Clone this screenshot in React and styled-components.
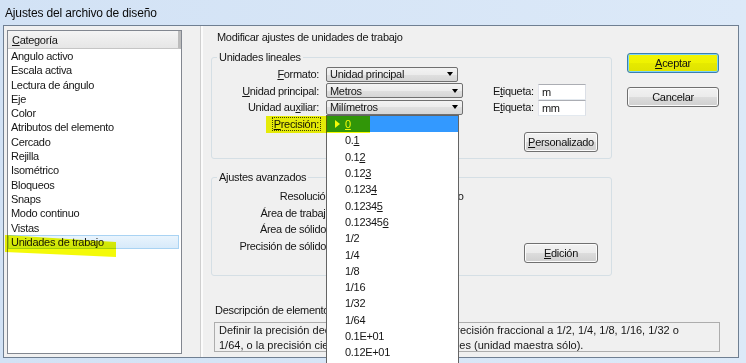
import React from 'react';
import styled, { createGlobalStyle, css } from 'styled-components';

const GlobalStyle = createGlobalStyle`
  html, body { margin: 0; padding: 0; background: #d3e3f6; }
  body {
    width: 746px; height: 363px; overflow: hidden;
    font-family: "Liberation Sans", Arial, sans-serif;
    font-size: 11px; letter-spacing: -0.3px; color: #151515;
  }
  * { box-sizing: border-box; }
  u { text-decoration-thickness: 1px; text-underline-offset: 1px; }
`;

const Window = styled.div`
  position: relative;
  width: 746px; height: 363px; overflow: hidden;
  background: linear-gradient(to right, #d2e2f5, #dce9f8);
  display: flex; flex-direction: column;
  isolation: isolate;
`;

const TitleBar = styled.div`
  height: 25px; flex: none;
  display: flex; align-items: center;
  padding: 1px 0 0 5px;
  font-size: 12px; letter-spacing: -0.15px; color: #0a0a0a;
`;

const Body = styled.div`
  margin: 0 7px 0 3px;
  height: 333px; flex: none;
  border: 1px solid #6f7f92;
  background: #f0f0f0;
  display: flex;
`;

const LeftPane = styled.div`
  width: 196px; flex: none;
  padding: 4px 0 0 3px;
`;

const ListBox = styled.div`
  width: 175px; height: 324px;
  border: 1px solid #828790;
  background: #fff;
  display: flex; flex-direction: column;
`;

const ListHeader = styled.div`
  height: 18px; flex: none;
  display: flex; align-items: center;
  padding-left: 4px;
  background: linear-gradient(#f4f4f4, #e6e6e6);
  border-bottom: 1px solid #c5c5c5;
  border-right: 3px solid #bcbcbc;
`;

const ListItem = styled.div`
  height: 14.3px; line-height: 13.3px;
  padding-left: 2px;
  border: 1px solid transparent;
  white-space: nowrap;
  &:first-of-type { margin-top: 2px; }
  ${(p) => p.$selected && css`
    background: linear-gradient(#e9f4fd, #d7eafa);
    border-color: #a9d3f3;
    margin-right: 2px;
  `}
`;

const Splitter = styled.div`
  width: 3px; flex: none;
  border-left: 1px solid #cfcfcf;
  background: #fbfbfb;
`;

const RightPane = styled.div`
  flex: 1;
  display: grid;
  grid-template-columns: 401px 92px;
  column-gap: 15px;
  align-content: start;
  padding: 4px 0 0 8px;
`;

const MainCol = styled.div`
  display: flex; flex-direction: column;
`;

const Heading = styled.div`
  height: 14px; line-height: 14px;
  padding-left: 6px;
`;

const Group = styled.fieldset`
  margin: ${(p) => p.$gap}px 0 0 0;
  padding: 0;
  min-width: 0;
  border: 1px solid #d5dfe5;
  border-radius: 3px;
`;

const Legend = styled.legend`
  margin-left: 5px;
  padding: 0 2px;
  height: 14px; line-height: 14px;
`;

const UnitsGrid = styled.div`
  display: grid;
  grid-template-columns: 114px 137px 75px 48px;
  grid-auto-rows: 16.5px;
  align-items: center;
  padding-top: 2px;
`;

const FieldLabel = styled.div`
  text-align: right;
  padding-right: ${(p) => p.$pr ?? 7}px;
  white-space: nowrap;
`;

const SideLabel = styled.div`
  padding-left: 30px;
  white-space: nowrap;
`;

const FocusText = styled.span`
  outline: 1px dotted #444;
  outline-offset: 0;
  padding: 0 1px;
`;

const Combo = styled.div`
  width: ${(p) => p.$w}px; height: 15px;
  border: 1px solid #707070;
  border-radius: 2px;
  background: linear-gradient(#f3f3f3, #ececec 50%, #e0e0e0 50%, #d6d6d6);
  display: flex; align-items: center; justify-content: space-between;
  padding: 0 4px 0 3px;
  white-space: nowrap;
`;

const ComboArrow = styled.span`
  width: 0; height: 0;
  border-left: 3.5px solid transparent;
  border-right: 3.5px solid transparent;
  border-top: 4px solid #000;
`;

const TextBox = styled.div`
  width: 48px; height: 16px;
  margin-top: 2px;
  background: #fff;
  border: 1px solid;
  border-color: #abadb3 #dbdfe6 #e3e9ef #e2e3ea;
  padding-left: 3px;
  line-height: 14px;
`;

const ButtonRow = styled.div`
  display: flex; justify-content: flex-end;
  padding: 0 13px 6px 0;
`;

const Button = styled.button`
  font: inherit; letter-spacing: inherit; color: #111;
  width: ${(p) => p.$w}px; height: 20px;
  padding: 0; margin: 0;
  border: 1px solid #707070;
  border-radius: 3px;
  background: linear-gradient(#f2f2f2 0%, #ebebeb 50%, #dddddd 50%, #cfcfcf 100%);
  box-shadow: inset 0 0 0 1px #fbfbfb;
  ${(p) => p.$default && css`
    border-color: #3c7fb1;
    background: linear-gradient(#f1f505 0%, #eef200 50%, #e6ea00 50%, #dfe300 100%);
    box-shadow: inset 0 0 0 1px #7fd4f5;
  `}
`;

const AdvGrid = styled.div`
  display: grid;
  grid-template-columns: 123px 1fr 74px;
  grid-template-rows: repeat(4, 16.5px) 9px;
  align-items: center;
  padding: 4px 13px 12px 0;
`;

const Value = styled.div`
  padding-left: 7px;
  white-space: nowrap;
`;

const EditButton = styled(Button)`
  grid-column: 3;
  grid-row: 4 / span 2;
  align-self: end;
`;

const ButtonCol = styled.div`
  display: flex; flex-direction: column; gap: 14px;
  padding-top: 23px;
`;

const DescArea = styled.div`
  grid-column: 1 / -1;
  padding-top: 27px;
`;

const DescLabel = styled.div`
  height: 14px; line-height: 14px;
  padding-left: 4px;
`;

const DescBox = styled.div`
  margin: 5px 0 0 3px;
  width: 506px; height: 30px;
  border: 1px solid #adadad;
  padding: 0 4px;
  line-height: 14.5px;
  letter-spacing: 0;
  white-space: nowrap;
`;

const DropList = styled.ul`
  position: absolute;
  left: 326px; top: 115px;
  width: 133px; height: 262px;
  margin: 0; padding: 0;
  list-style: none;
  background: #fff;
  border: 1px solid #646464;
  z-index: 5;
`;

const DropItem = styled.li`
  height: 16.3px;
  display: flex; align-items: center;
  padding-left: 18px;
  white-space: nowrap;
  ${(p) => p.$active && css`
    background: #3399ff;
    color: #fff;
    padding-left: 8px;
  `}
`;

const Pointer = styled.span`
  width: 0; height: 0;
  border-top: 4px solid transparent;
  border-bottom: 4px solid transparent;
  border-left: 5px solid #fff;
  margin-right: 5px;
`;

const Highlighter = styled.div`
  position: absolute;
  left: ${(p) => p.$x}px; top: ${(p) => p.$y}px;
  width: ${(p) => p.$w}px; height: ${(p) => p.$h}px;
  background: #f4fa08;
  mix-blend-mode: multiply;
  clip-path: ${(p) => p.$clip || 'none'};
  z-index: 10;
  pointer-events: none;
`;

const categories = [
  'Angulo activo', 'Escala activa', 'Lectura de ángulo', 'Eje', 'Color',
  'Atributos del elemento', 'Cercado', 'Rejilla', 'Isométrico', 'Bloqueos',
  'Snaps', 'Modo continuo', 'Vistas', 'Unidades de trabajo',
];

const precisions = [
  ['0', ''], ['0.', '1'], ['0.1', '2'], ['0.12', '3'], ['0.123', '4'], ['0.1234', '5'],
  ['0.12345', '6'], ['1/2'], ['1/4'], ['1/8'], ['1/16'], ['1/32'], ['1/64'],
  ['0.1E+01'], ['0.12E+01'],
];

export default function App() {
  return (
    <>
      <GlobalStyle />
      <Window>
        <TitleBar>Ajustes del archivo de diseño</TitleBar>
        <Body>
          <LeftPane>
            <ListBox>
              <ListHeader><span><u>C</u>ategoría</span></ListHeader>
              {categories.map((c) => (
                <ListItem key={c} $selected={c === 'Unidades de trabajo'}>{c}</ListItem>
              ))}
            </ListBox>
          </LeftPane>
          <Splitter />
          <RightPane>
            <MainCol>
              <Heading>Modificar ajustes de unidades de trabajo</Heading>
              <Group $gap={6}>
                <Legend>Unidades lineales</Legend>
                <UnitsGrid>
                  <FieldLabel><u>F</u>ormato:</FieldLabel>
                  <Combo $w={132}><span>Unidad principal</span><ComboArrow /></Combo>
                  <div />
                  <div />

                  <FieldLabel><u>U</u>nidad principal:</FieldLabel>
                  <Combo $w={137}><span>Metros</span><ComboArrow /></Combo>
                  <SideLabel>E<u>t</u>iqueta:</SideLabel>
                  <TextBox>m</TextBox>

                  <FieldLabel>Unidad au<u>x</u>iliar:</FieldLabel>
                  <Combo $w={137}><span>Milímetros</span><ComboArrow /></Combo>
                  <SideLabel>E<u>t</u>iqueta:</SideLabel>
                  <TextBox>mm</TextBox>

                  <FieldLabel $pr={6}><FocusText><u>P</u>recisión:</FocusText></FieldLabel>
                  <Combo $w={132}><span /><ComboArrow /></Combo>
                </UnitsGrid>
                <ButtonRow>
                  <Button $w={74}><u>P</u>ersonalizado</Button>
                </ButtonRow>
              </Group>
              <Group $gap={11}>
                <Legend>Ajustes avanzados</Legend>
                <AdvGrid>
                  <FieldLabel $pr={1}>Resolución:</FieldLabel>
                  <Value>10000 por Distancia Metro</Value>
                  <div />
                  <FieldLabel $pr={1}>Área de trabajo:</FieldLabel>
                  <div />
                  <div />
                  <FieldLabel $pr={1}>Área de sólidos:</FieldLabel>
                  <div />
                  <div />
                  <FieldLabel $pr={1}>Precisión de sólidos:</FieldLabel>
                  <div />
                  <EditButton $w={74}><u>E</u>dición</EditButton>
                </AdvGrid>
              </Group>
            </MainCol>
            <ButtonCol>
              <Button $w={92} $default><u>A</u>ceptar</Button>
              <Button $w={92}>Cancelar</Button>
            </ButtonCol>
            <DescArea>
              <DescLabel>Descripción de elementos</DescLabel>
              <DescBox>
                <div>Definir la precisión decimal de 0 a 6 lugares, la precisión fraccional a 1/2, 1/4, 1/8, 1/16, 1/32 o</div>
                <div>1/64, o la precisión científica a uno o dos decimales (unidad maestra sólo).</div>
              </DescBox>
            </DescArea>
          </RightPane>
        </Body>

        <DropList>
          {precisions.map(([base, tail], i) => (
            <DropItem key={base + (tail || '')} $active={i === 0}>
              {i === 0 && <Pointer />}
              {i === 0 ? <u>0</u> : tail ? <span>{base}<u>{tail}</u></span> : base}
            </DropItem>
          ))}
        </DropList>

        <Highlighter $x={266} $y={116} $w={104} $h={17} />
        <Highlighter $x={5} $y={235} $w={111} $h={22}
          $clip="polygon(0 0, 100% 7px, 100% 100%, 0 17px)" />
      </Window>
    </>
  );
}
